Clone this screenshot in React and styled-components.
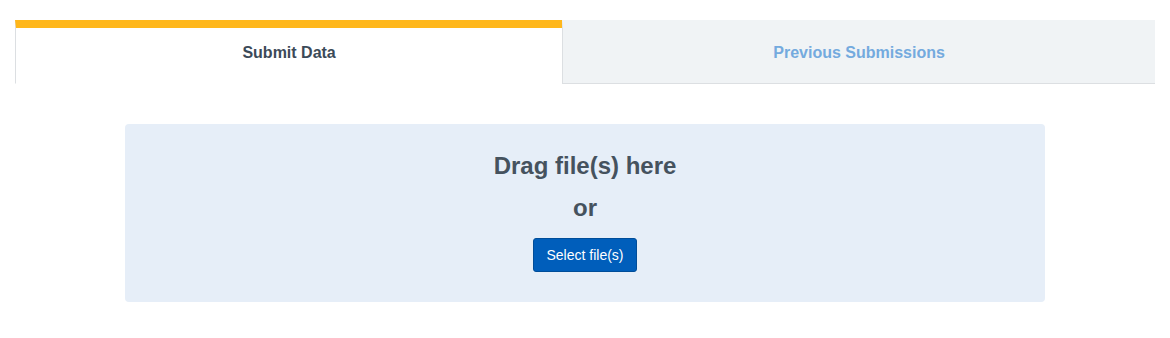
import React, { useState } from 'react';
import styled, { createGlobalStyle } from 'styled-components';

const GlobalStyle = createGlobalStyle`
  body {
    margin: 0;
    background: #ffffff;
    font-family: 'Liberation Sans', Arial, sans-serif;
  }
`;

const Page = styled.div`
  padding: 20px 15px 0;
`;

const TabBar = styled.div`
  display: flex;
`;

const Tab = styled.button`
  flex: ${p => (p.$grow ? '1 1 0' : '0 0 48%')};
  height: 64px;
  padding: 0 0 6px;
  margin: 0;
  font-family: 'Liberation Sans', Arial, sans-serif;
  font-size: 16px;
  font-weight: bold;
  cursor: pointer;
  background: ${p => (p.$active ? '#ffffff' : '#f0f3f5')};
  color: ${p => (p.$active ? '#3c4a58' : '#74aade')};
  border: none;
  border-left: 1px solid #dcdfe2;
  border-top: 8px solid ${p => (p.$active ? '#ffb71b' : '#f0f3f5')};
  border-bottom: 1px solid ${p => (p.$active ? '#ffffff' : '#dcdfe2')};
  box-sizing: border-box;
`;

const Panel = styled.div`
  padding: 40px 0 0;
  display: flex;
  justify-content: center;
`;

const DropZone = styled.div`
  width: 920px;
  box-sizing: border-box;
  background: #e6eef8;
  border-radius: 4px;
  padding: 28px 0 30px;
  display: flex;
  flex-direction: column;
  align-items: center;
`;

const Heading = styled.div`
  font-size: 24px;
  line-height: 28px;
  font-weight: bold;
  color: #45525e;
  margin-bottom: ${p => p.$gap || 0}px;
`;

const SelectButton = styled.button`
  height: 34px;
  padding: 0 12px;
  background: #005ebb;
  color: #ffffff;
  border: 1px solid #004d99;
  border-radius: 3px;
  font-family: 'Liberation Sans', Arial, sans-serif;
  font-size: 14px;
  cursor: pointer;
`;

export default function App() {
  const [tab, setTab] = useState('submit');

  return (
    <Page>
      <GlobalStyle />
      <TabBar>
        <Tab $active={tab === 'submit'} onClick={() => setTab('submit')}>
          Submit Data
        </Tab>
        <Tab $grow $active={tab === 'previous'} onClick={() => setTab('previous')}>
          Previous Submissions
        </Tab>
      </TabBar>
      <Panel>
        <DropZone>
          <Heading $gap={14}>Drag file(s) here</Heading>
          <Heading $gap={16}>or</Heading>
          <SelectButton>Select file(s)</SelectButton>
        </DropZone>
      </Panel>
    </Page>
  );
}
